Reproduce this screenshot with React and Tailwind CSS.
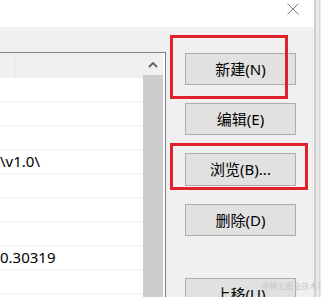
import React from "react";

function Btn({ label, className = "" }) {
  return (
    <div
      className={`w-[111px] h-[32px] shrink-0 bg-[#e1e1e1] border border-[#adadad] flex items-center justify-center text-[15px] leading-none text-black ${className}`}
    >
      <span className="font-['Noto_Sans','Noto_Sans_CJK_SC',sans-serif]">{label}</span>
    </div>
  );
}

export default function App() {
  const rows = ["", "", "", "\\v1.0\\", "", "", "", "0.30319", ""];
  return (
    <div
      className="relative w-[321px] h-[297px] overflow-hidden bg-[#f0f0f0] flex flex-col font-['Noto_Sans','Noto_Sans_CJK_SC',sans-serif]"
    >
      {/* title strip */}
      <div className="h-[27px] shrink-0 bg-white flex">
        <div className="w-[314px] flex justify-end items-start pt-[3px] pr-[15px]">
          <svg width="12" height="12" viewBox="0 0 12 12">
            <path d="M0.5 0.5 L11.5 11.5 M11.5 0.5 L0.5 11.5" stroke="#7d7d7d" strokeWidth="1" fill="none" />
          </svg>
        </div>
      </div>

      <div className="flex flex-1 min-h-0">
        {/* list box */}
        <div className="w-[166px] shrink-0 mt-[25px] border-t border-r border-[#828282] bg-white flex">
          <div className="w-[143px] flex flex-col">
            <div className="h-[25px] shrink-0 bg-[#f0f0f0] flex">
              <div className="w-[16px] border-r border-[#e9e9e9]" />
            </div>
            {rows.map((r, i) => (
              <div
                key={i}
                className="h-[24px] shrink-0 border-b border-[#f0f0f0] flex items-center text-[15px] leading-none text-black whitespace-nowrap"
              >
                {r}
              </div>
            ))}
          </div>
          <div className="w-[20px] flex flex-col">
            <div className="h-[22px] bg-[#f0f0f0] flex items-center justify-center">
              <svg width="10" height="7" viewBox="0 0 10 7">
                <path d="M1 6 L5 2 L9 6" stroke="#606060" strokeWidth="1.8" fill="none" />
              </svg>
            </div>
            <div className="flex-1 bg-[#cdcdcd]" />
          </div>
          <div className="w-[2px] bg-white" />
        </div>

        {/* buttons */}
        <div className="w-[148px] shrink-0 pl-[19px] pt-[26px] flex flex-col gap-[18px]">
          <Btn label="新建(N)" />
          <Btn label="编辑(E)" />
          <Btn label="浏览(B)..." className="h-[33px]" />
          <Btn label="删除(D)" />
          <Btn label="上移(U)" className="mt-[24px]" />
        </div>

        {/* window edge */}
        <div className="w-[2px] bg-[#cfcfcf] -mt-[27px]" />
        <div className="flex-1 -mt-[27px] bg-[#e9e9e9] flex">
          <div className="w-[3px]" />
          <div className="w-[1px] bg-[#d6d6d6]" />
        </div>
      </div>

      {/* annotation boxes */}
      <div className="absolute left-[170px] top-[35px] w-[118px] h-[64px] border-[3px] border-[#e0212b]" />
      <div className="absolute left-[170px] top-[143px] w-[138px] h-[47px] border-[3px] border-[#e0212b]" />

      {/* watermark */}
      <div className="absolute left-[262px] top-[282px] text-[8px] leading-none text-[#c8c8c8] whitespace-nowrap">
        @稀土掘金技术社区
      </div>
    </div>
  );
}
